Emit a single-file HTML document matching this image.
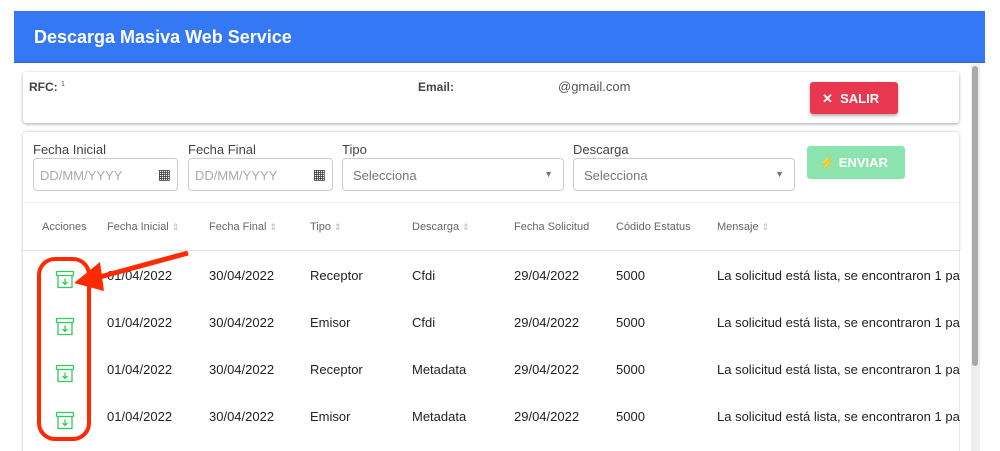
<!DOCTYPE html>
<html><head><meta charset="utf-8"><style>
*{box-sizing:border-box;margin:0;padding:0}
html,body{width:1000px;height:451px;overflow:hidden}
body{background:#fff;font-family:"Liberation Sans",Arial,sans-serif;position:relative;color:#333}
.a{position:absolute}
.hdr{left:14px;top:11px;width:971px;height:52px;background:#3478f6;border-bottom:1px solid #2a64d0}
.hdr span{position:absolute;left:20px;top:16px;color:#fff;font-size:18px;font-weight:bold}
.card{background:#fff;border-radius:3px;box-shadow:0 1px 3px rgba(0,0,0,.35)}
.lbl{font-size:13px;color:#444}
.in{border:1px solid #ccc;border-radius:4px;height:33px;top:158px;font-size:13px;color:#aaa;padding:9px 0 0 6px}
.th{font-size:11px;color:#666;top:221px}
.td{font-size:13px;color:#222}
.sort{color:#bbb;font-size:9px}
.scroll{left:971px;top:64px;width:9px;height:387px;background:#eee}
.scroll div{position:absolute;left:1px;top:2px;width:6px;height:300px;background:#aaa;border-radius:3px}
</style></head><body>
<div class="a hdr"><span>Descarga Masiva Web Service</span></div>
<div class="a scroll"><div></div></div>
<div class="a card" style="left:23px;top:72px;width:936px;height:51px"></div>
<div class="a lbl" style="left:29px;top:80px;font-weight:bold;font-size:12px">RFC: <sup style="font-size:7px;font-weight:normal">1</sup></div>
<div class="a lbl" style="left:418px;top:80px;font-weight:bold;font-size:12px">Email:</div>
<div class="a lbl" style="left:558px;top:79px;color:#555">@gmail.com</div>
<div class="a" style="left:810px;top:82px;width:88px;height:32px;background:#e8384f;border-radius:3px;box-shadow:0 2px 3px rgba(0,0,0,.3);color:#fff;font-weight:bold;font-size:13px;padding:9px 0 0 12px">✕&nbsp; SALIR</div>
<div class="a card" style="left:23px;top:132px;width:936px;height:330px;box-shadow:0 0 3px rgba(0,0,0,.25)"></div>
<div class="a" style="left:23px;top:202px;width:936px;height:1px;background:#eee"></div>
<div class="a lbl" style="left:33px;top:142px">Fecha Inicial</div>
<div class="a lbl" style="left:188px;top:142px">Fecha Final</div>
<div class="a lbl" style="left:342px;top:142px">Tipo</div>
<div class="a lbl" style="left:573px;top:142px">Descarga</div>
<div class="a in" style="left:33px;width:145px">DD/MM/YYYY<span class="a" style="right:6px;top:7px;color:#333;font-size:14px">▦</span></div>
<div class="a in" style="left:188px;width:145px">DD/MM/YYYY<span class="a" style="right:6px;top:7px;color:#333;font-size:14px">▦</span></div>
<div class="a in" style="left:342px;width:222px;color:#777;padding-left:10px">Selecciona<span class="a" style="right:10px;top:10px;color:#777;font-size:9px">▼</span></div>
<div class="a in" style="left:573px;width:222px;color:#777;padding-left:10px">Selecciona<span class="a" style="right:10px;top:10px;color:#777;font-size:9px">▼</span></div>
<div class="a" style="left:807px;top:146px;width:98px;height:33px;background:#8be4ad;border-radius:3px;color:#fff;font-weight:bold;font-size:13px;padding:9px 0 0 12px">⚡ ENVIAR</div>
<div class="a th" style="left:42px">Acciones</div>
<div class="a th" style="left:107px">Fecha Inicial <span class="sort">⇕</span></div>
<div class="a th" style="left:209px">Fecha Final <span class="sort">⇕</span></div>
<div class="a th" style="left:310px">Tipo <span class="sort">⇕</span></div>
<div class="a th" style="left:412px">Descarga <span class="sort">⇕</span></div>
<div class="a th" style="left:514px">Fecha Solicitud</div>
<div class="a th" style="left:616px">Códido Estatus</div>
<div class="a th" style="left:717px">Mensaje <span class="sort">⇕</span></div>
<div class="a" style="left:23px;top:250px;width:936px;height:1px;background:#e3e3e3"></div>
<div class="a" style="left:0;top:268px;width:960px;font-size:13px">
<div class="a td" style="left:107px;top:0">01/04/2022</div><div class="a td" style="left:209px;top:0">30/04/2022</div><div class="a td" style="left:310px;top:0">Receptor</div><div class="a td" style="left:412px;top:0">Cfdi</div><div class="a td" style="left:514px;top:0">29/04/2022</div><div class="a td" style="left:616px;top:0">5000</div><div class="a td" style="left:717px;top:0;white-space:nowrap">La solicitud está lista, se encontraron 1 pa</div>
<div class="a td" style="left:107px;top:47px">01/04/2022</div><div class="a td" style="left:209px;top:47px">30/04/2022</div><div class="a td" style="left:310px;top:47px">Emisor</div><div class="a td" style="left:412px;top:47px">Cfdi</div><div class="a td" style="left:514px;top:47px">29/04/2022</div><div class="a td" style="left:616px;top:47px">5000</div><div class="a td" style="left:717px;top:47px;white-space:nowrap">La solicitud está lista, se encontraron 1 pa</div>
<div class="a td" style="left:107px;top:94px">01/04/2022</div><div class="a td" style="left:209px;top:94px">30/04/2022</div><div class="a td" style="left:310px;top:94px">Receptor</div><div class="a td" style="left:412px;top:94px">Metadata</div><div class="a td" style="left:514px;top:94px">29/04/2022</div><div class="a td" style="left:616px;top:94px">5000</div><div class="a td" style="left:717px;top:94px;white-space:nowrap">La solicitud está lista, se encontraron 1 pa</div>
<div class="a td" style="left:107px;top:141px">01/04/2022</div><div class="a td" style="left:209px;top:141px">30/04/2022</div><div class="a td" style="left:310px;top:141px">Emisor</div><div class="a td" style="left:412px;top:141px">Metadata</div><div class="a td" style="left:514px;top:141px">29/04/2022</div><div class="a td" style="left:616px;top:141px">5000</div><div class="a td" style="left:717px;top:141px;white-space:nowrap">La solicitud está lista, se encontraron 1 pa</div>
</div>
<div class="a" style="left:960px;top:251px;width:11px;height:200px;background:#fff"></div>
<svg class="a" style="left:0;top:0" width="1000" height="451">
<defs><g id="ic" fill="none" stroke="#2ecc5a" stroke-width="1.3"><rect x="0.5" y="0.5" width="17" height="4" rx="1"/><path d="M2 4.5v12h14v-12M9 7.5v6M6.5 11l2.5 2.5 2.5-2.5"/></g></defs>
<use href="#ic" x="56" y="271"/><use href="#ic" x="56" y="318"/><use href="#ic" x="56" y="365"/><use href="#ic" x="56" y="412"/>
<rect x="39" y="259" width="50" height="180" rx="16" fill="none" stroke="#ff2a00" stroke-width="4"/>
<path d="M188 253 L96 278" stroke="#ff2a00" stroke-width="5"/>
<path d="M74 283 L100 262 L104 291 Z" fill="#ff2a00"/>
</svg>
</body></html>
